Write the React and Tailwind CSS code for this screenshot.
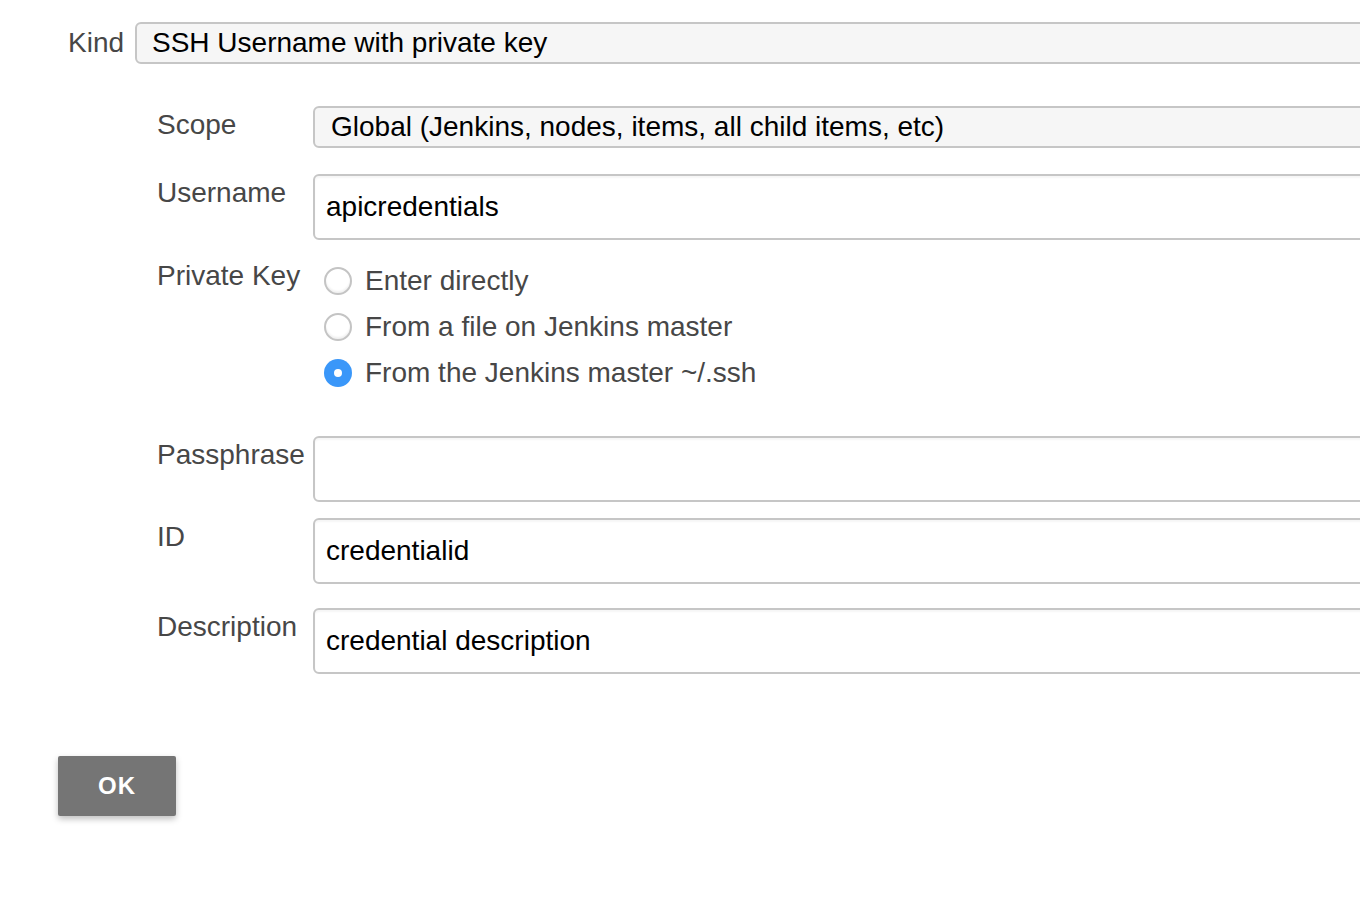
import React from "react";

const font = { fontFamily: '"Liberation Sans", Arial, Helvetica, sans-serif' };

function Radio({ checked }) {
  return checked ? (
    <span className="flex h-[28px] w-[28px] shrink-0 items-center justify-center rounded-full bg-[#3a97f9]">
      <span className="h-[8px] w-[8px] rounded-full bg-white" />
    </span>
  ) : (
    <span className="h-[28px] w-[28px] shrink-0 rounded-full border-2 border-[#c4c4c4] bg-white shadow-[inset_0_-2px_2px_rgba(0,0,0,0.06)]" />
  );
}

function Row({ label, children, className = "" }) {
  return (
    <div className={"flex items-start " + className}>
      <div className="w-[156px] shrink-0 pt-[4px] text-[28px] leading-[30px] text-[#474747]">{label}</div>
      <div className="flex-1">{children}</div>
    </div>
  );
}

function Select({ text, className = "" }) {
  return (
    <div className={"flex h-[42px] items-center rounded-[6px] border-2 border-[#c6c6c6] bg-[#f6f6f6] mr-[-20px] text-[28px] leading-[30px] text-black " + className}>
      {text}
    </div>
  );
}

function Input({ value }) {
  return (
    <div className="flex h-[66px] items-center rounded-[6px] border-2 border-[#c6c6c6] bg-white pl-[11px] mr-[-20px] text-[28px] leading-[30px] text-black shadow-[inset_0_2px_2px_rgba(0,0,0,0.04)]">
      {value}
    </div>
  );
}

export default function App() {
  return (
    <div className="h-[898px] w-[1360px] overflow-hidden bg-white" style={font}>
      <div className="flex items-center pl-[68px] pt-[22px]">
        <div className="w-[67px] shrink-0 text-[28px] leading-[30px] text-[#474747]">Kind</div>
        <div className="flex-1">
          <Select text="SSH Username with private key" className="pl-[15px]" />
        </div>
      </div>

      <div className="flex flex-col pl-[157px] pt-[42px]">
        <Row label="Scope">
          <Select text="Global (Jenkins, nodes, items, all child items, etc)" className="pl-[16px]" />
        </Row>
        <Row label="Username" className="mt-[26px]">
          <Input value="apicredentials" />
        </Row>
        <Row label="Private Key" className="mt-[17px]">
          <div className="flex flex-col pl-[11px] pt-[1px] text-[28px] leading-[30px] text-[#474747]">
            <label className="flex h-[46px] items-center gap-[13px]"><Radio /> Enter directly</label>
            <label className="flex h-[46px] items-center gap-[13px]"><Radio /> From a file on Jenkins master</label>
            <label className="flex h-[46px] items-center gap-[13px]"><Radio checked /> From the Jenkins master ~/.ssh</label>
          </div>
        </Row>
        <Row label="Passphrase" className="mt-[40px]">
          <Input value="" />
        </Row>
        <Row label="ID" className="mt-[16px]">
          <Input value="credentialid" />
        </Row>
        <Row label="Description" className="mt-[24px]">
          <Input value="credential description" />
        </Row>
      </div>

      <div className="pl-[58px] pt-[82px]">
        <button className="flex h-[60px] w-[118px] items-center justify-center rounded-[2px] bg-[#757575] text-[24px] font-bold tracking-[1px] text-white shadow-[0_3px_6px_rgba(0,0,0,0.25)]">
          OK
        </button>
      </div>
    </div>
  );
}
